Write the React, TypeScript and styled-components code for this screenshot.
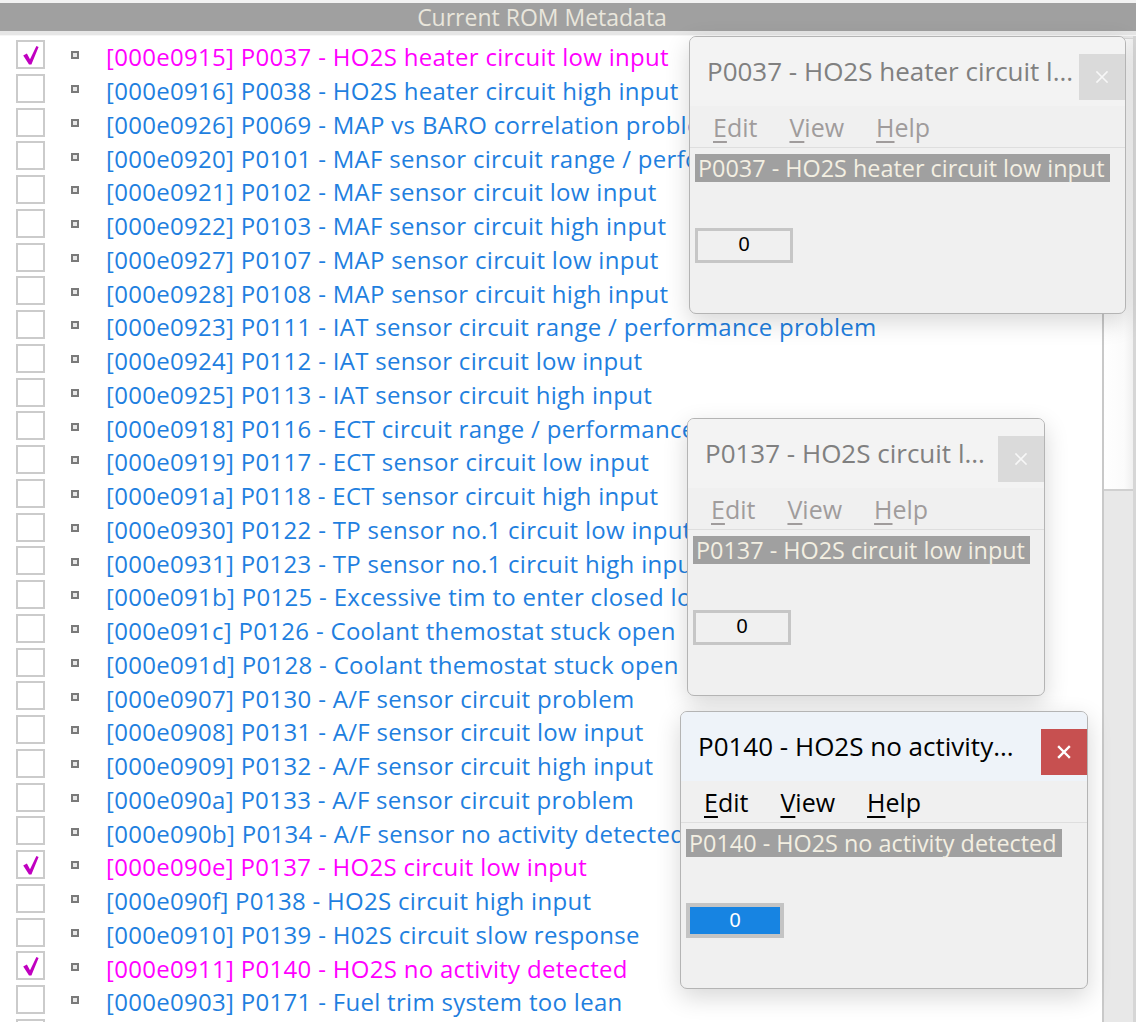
import React from "react";
import styled, { createGlobalStyle } from "styled-components";

const GlobalStyle = createGlobalStyle`
  html, body { margin: 0; padding: 0; background: #ffffff; overflow: hidden; }
  body { font-family: "Open Sans", "Noto Sans", sans-serif; }
`;

const Page = styled.div`
  position: relative;
  width: 1136px;
  height: 1022px;
  overflow: hidden;
  background: #ffffff;
  display: flex;
  flex-direction: column;
  font-family: "Open Sans", "Noto Sans", sans-serif;
`;

const TopStrip = styled.div`
  height: 3px;
  background: #f2f2f2;
  flex: none;
`;

const Header = styled.div`
  height: 28px;
  flex: none;
  box-sizing: border-box;
  padding-right: 52px;
  background: #a0a0a0;
  color: #e9e6dc;
  font-size: 23px;
  line-height: 28px;
  text-align: center;
`;

const HeaderRule = styled.div`
  height: 4px;
  flex: none;
  background: #e6e6e6;
  border-bottom: 1px solid #f6f6f6;
`;

const Body = styled.div`
  flex: 1;
  min-height: 0;
  display: flex;
`;

const List = styled.div`
  flex: 1;
  min-width: 0;
  padding-top: 4px;
  overflow: hidden;
`;

const Row = styled.div`
  height: 33.75px;
  display: flex;
  align-items: center;
  white-space: nowrap;
`;

const Check = styled.div`
  align-self: flex-start;
  box-sizing: border-box;
  width: 29px;
  height: 29px;
  margin-left: 16px;
  border: 2px solid #cbcbcb;
  background: #ffffff;
  flex: none;
  display: flex;
  align-items: center;
  justify-content: center;
`;

const Bullet = styled.div`
  box-sizing: border-box;
  width: 8px;
  height: 8px;
  margin-left: 26px;
  margin-top: -3px;
  border: 2px solid #7a7a7a;
  background: #e8e8e8;
  flex: none;
`;

const Label = styled.span<{ $on: boolean }>`
  margin-left: 27px;
  font-size: 24px;
  letter-spacing: 0.3px;
  color: ${(p) => (p.$on ? "#ff00ff" : "#1f7fdf")};
`;

const Scrollbar = styled.div`
  width: 34px;
  flex: none;
  box-sizing: border-box;
  border-left: 2px solid #c9c9c9;
  border-right: 3px solid #d6d6d6;
  background: #e8e8e8;
  display: flex;
  flex-direction: column;
`;

const Thumb = styled.div`
  margin-top: 2px;
  height: 450px;
  background: linear-gradient(to right, #ffffff 0%, #fbfbfb 70%, #f0f0f0 100%);
  border-top: 1px solid #d8d8d8;
  border-bottom: 2px solid #d0d0d0;
`;

const Win = styled.div<{ $x: number; $y: number; $w: number }>`
  position: absolute;
  left: ${(p) => p.$x}px;
  top: ${(p) => p.$y}px;
  width: ${(p) => p.$w}px;
  height: 278px;
  box-sizing: border-box;
  border: 1.5px solid #b4b4b4;
  border-radius: 7px;
  background: #f0f0f0;
  box-shadow: 0 8px 24px rgba(0, 0, 0, 0.16);
  display: flex;
  flex-direction: column;
  overflow: hidden;
`;

const TitleBar = styled.div<{ $active: boolean }>`
  height: 69px;
  flex: none;
  display: flex;
  align-items: flex-start;
  background: ${(p) => (p.$active ? "#eef3f9" : "#f3f3f3")};
`;

const TitleText = styled.div<{ $active: boolean }>`
  flex: 1;
  min-width: 0;
  padding-left: 17px;
  padding-top: 15px;
  font-size: 26px;
  line-height: 38px;
  white-space: nowrap;
  overflow: hidden;
  color: ${(p) => (p.$active ? "#000000" : "#808080")};
`;

const CloseBtn = styled.div<{ $active: boolean }>`
  width: 46px;
  height: 46px;
  margin-top: 17px;
  margin-right: 0.5px;
  flex: none;
  display: flex;
  align-items: center;
  justify-content: center;
  background: ${(p) => (p.$active ? "#c75050" : "#dadada")};
`;

const MenuBar = styled.div`
  height: 42px;
  flex: none;
  box-sizing: border-box;
  display: flex;
  align-items: center;
  gap: 32px;
  padding-left: 23px;
  border-bottom: 1px solid #dedede;
`;

const MenuItem = styled.span<{ $active: boolean }>`
  font-size: 25px;
  line-height: 30px;
  color: ${(p) => (p.$active ? "#000000" : "#a09c9c")};
  u {
    text-underline-offset: 4px;
    text-decoration-thickness: 2px;
  }
`;

const Content = styled.div`
  flex: 1;
  display: flex;
  flex-direction: column;
  align-items: flex-start;
  padding: 6px 5px 0;
`;

const Selected = styled.div`
  height: 28px;
  line-height: 28px;
  padding: 0 5px 0 3px;
  background: #a0a0a0;
  color: #f3efe2;
  font-size: 23.4px;
  white-space: nowrap;
`;

const ValueBox = styled.div<{ $active: boolean }>`
  margin-top: 46px;
  box-sizing: border-box;
  width: 98px;
  height: 35px;
  border: ${(p) => (p.$active ? "4px solid #c4c4c4" : "3px solid #c6c6c6")};
  background: ${(p) => (p.$active ? "#1784e2" : "#f0f0f0")};
  color: ${(p) => (p.$active ? "#ffffff" : "#000000")};
  font-family: "Liberation Sans", Arial, sans-serif;
  font-size: 20px;
  line-height: 27px;
  text-align: center;
`;

type Item = { text: string; on?: boolean };

const items: Item[] = [
  { text: "[000e0915] P0037 - HO2S heater circuit low input", on: true },
  { text: "[000e0916] P0038 - HO2S heater circuit high input" },
  { text: "[000e0926] P0069 - MAP vs BARO correlation problem" },
  { text: "[000e0920] P0101 - MAF sensor circuit range / performance problem" },
  { text: "[000e0921] P0102 - MAF sensor circuit low input" },
  { text: "[000e0922] P0103 - MAF sensor circuit high input" },
  { text: "[000e0927] P0107 - MAP sensor circuit low input" },
  { text: "[000e0928] P0108 - MAP sensor circuit high input" },
  { text: "[000e0923] P0111 - IAT sensor circuit range / performance problem" },
  { text: "[000e0924] P0112 - IAT sensor circuit low input" },
  { text: "[000e0925] P0113 - IAT sensor circuit high input" },
  { text: "[000e0918] P0116 - ECT circuit range / performance problem" },
  { text: "[000e0919] P0117 - ECT sensor circuit low input" },
  { text: "[000e091a] P0118 - ECT sensor circuit high input" },
  { text: "[000e0930] P0122 - TP sensor no.1 circuit low input" },
  { text: "[000e0931] P0123 - TP sensor no.1 circuit high input" },
  { text: "[000e091b] P0125 - Excessive tim to enter closed loop" },
  { text: "[000e091c] P0126 - Coolant themostat stuck open" },
  { text: "[000e091d] P0128 - Coolant themostat stuck open" },
  { text: "[000e0907] P0130 - A/F sensor circuit problem" },
  { text: "[000e0908] P0131 - A/F sensor circuit low input" },
  { text: "[000e0909] P0132 - A/F sensor circuit high input" },
  { text: "[000e090a] P0133 - A/F sensor circuit problem" },
  { text: "[000e090b] P0134 - A/F sensor no activity detected" },
  { text: "[000e090e] P0137 - HO2S circuit low input", on: true },
  { text: "[000e090f] P0138 - HO2S circuit high input" },
  { text: "[000e0910] P0139 - H02S circuit slow response" },
  { text: "[000e0911] P0140 - HO2S no activity detected", on: true },
  { text: "[000e0903] P0171 - Fuel trim system too lean" },
  { text: "" },
];

const Tick = () => (
  <svg width="25" height="25" viewBox="0 0 25 25">
    <path
      d="M5.2 13.4 L8.9 11.5 L12 17.2 L18.4 4 L20.6 5 L13.4 22.6 L11 22.6 Z"
      fill="#c000c0"
    />
  </svg>
);

const CloseX = ({ active }: { active: boolean }) => (
  <svg width="14" height="14" viewBox="0 0 14 14">
    <path
      d="M2 2 L12 12 M12 2 L2 12"
      stroke={active ? "#ffffff" : "#f7f7f7"}
      strokeWidth={active ? 2.4 : 1.6}
      strokeLinecap="square"
    />
  </svg>
);

type WinProps = {
  x: number;
  y: number;
  w: number;
  title: string;
  label: string;
  active?: boolean;
};

const Menu = ({ name, active }: { name: string; active: boolean }) => (
  <MenuItem $active={active}>
    <u>{name[0]}</u>
    {name.slice(1)}
  </MenuItem>
);

const Window = ({ x, y, w, title, label, active = false }: WinProps) => (
  <Win $x={x} $y={y} $w={w}>
    <TitleBar $active={active}>
      <TitleText $active={active}>{title}</TitleText>
      <CloseBtn $active={active}>
        <CloseX active={active} />
      </CloseBtn>
    </TitleBar>
    <MenuBar>
      <Menu name="Edit" active={active} />
      <Menu name="View" active={active} />
      <Menu name="Help" active={active} />
    </MenuBar>
    <Content>
      <Selected>{label}</Selected>
      <ValueBox $active={active}>0</ValueBox>
    </Content>
  </Win>
);

export default function App() {
  return (
    <Page>
      <GlobalStyle />
      <TopStrip />
      <Header>Current ROM Metadata</Header>
      <HeaderRule />
      <Body>
        <List>
          {items.map((it, i) => (
            <Row key={i}>
              <Check>{it.on ? <Tick /> : null}</Check>
              <Bullet />
              {it.text ? <Label $on={!!it.on}>{it.text}</Label> : null}
            </Row>
          ))}
        </List>
        <Scrollbar>
          <Thumb />
        </Scrollbar>
      </Body>
      <Window
        x={689}
        y={36}
        w={437}
        title="P0037 - HO2S heater circuit l..."
        label="P0037 - HO2S heater circuit low input"
      />
      <Window
        x={687}
        y={418}
        w={358}
        title="P0137 - HO2S circuit l..."
        label="P0137 - HO2S circuit low input"
      />
      <Window
        x={680}
        y={711}
        w={408}
        title="P0140 - HO2S no activity..."
        label="P0140 - HO2S no activity detected"
        active
      />
    </Page>
  );
}
